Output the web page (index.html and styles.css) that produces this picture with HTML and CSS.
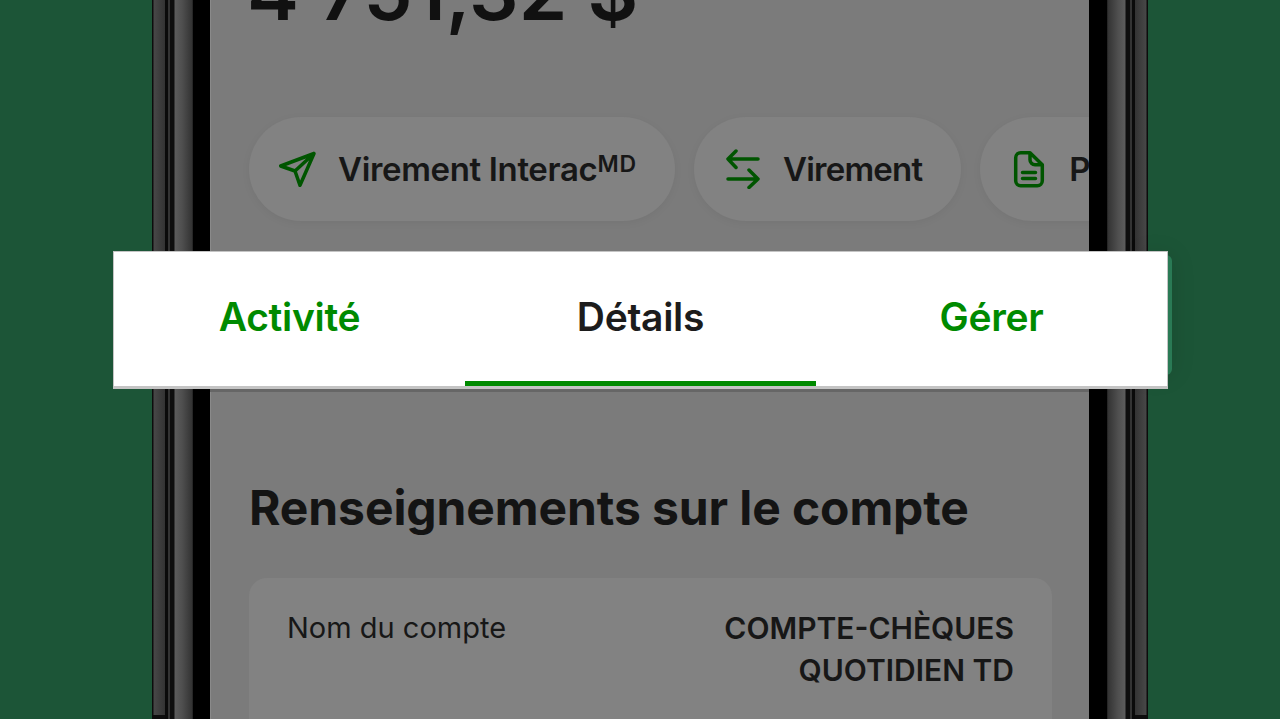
FILE: index.html
```html
<!DOCTYPE html>
<html lang="fr">
<head>
<meta charset="utf-8">
<title>Détails du compte</title>
<link rel="stylesheet" href="styles.css">
</head>
<body>
<main class="stage">
  <div class="phone">
    <div class="bezel"><span class="side-end"></span></div>
    <section class="screen">
      <p class="amount">4 751,32 $</p>
      <div class="actions">
        <div class="pill">
          <svg class="pill-icon" viewBox="0 0 40 40"><path d="M37 4.500 3.700 17 18 22l5 14.300zM18 22 37 4.500"/></svg>
          <span>Virement Interac<sup class="mark">MD</sup></span>
        </div>
        <div class="pill pill-tight">
          <svg class="pill-icon" viewBox="0 0 40 40"><path d="M36 10H6M14 2 6 10l8 8.500M6 30h30M27 21l9 9-9 8.500"/></svg>
          <span>Virement</span>
        </div>
        <div class="pill">
          <svg class="pill-icon" viewBox="0 0 40 40"><path d="M12.700 3.700h9.300l12.300 12v16a5 5 0 0 1-5 5H12.700a5 5 0 0 1-5-5V8.700a5 5 0 0 1 5-5zM22 3.700v7a5 5 0 0 0 5 5h7.300M14.500 23.500h13M14.500 29.500h13"/></svg>
          <span>Payer</span>
        </div>
      </div>
      <h2 class="heading">Renseignements sur le compte</h2>
      <div class="card">
        <span class="label">Nom du compte</span>
        <span class="value">COMPTE-CHÈQUES<br>QUOTIDIEN TD</span>
      </div>
    </section>
    <div class="bezel bezel-right"><span class="side-end"></span></div>
  </div>
  <div class="tabs-glow"></div>
  <div class="tabs-shadow"></div>
  <nav class="tabs">
    <a class="tab">Activité</a>
    <a class="tab tab-active">Détails</a>
    <a class="tab">Gérer</a>
  </nav>
</main>
</body>
</html>
```
FILE: styles.css
```css
* { box-sizing: border-box; }
html, body { margin: 0; height: 100%; }
body { overflow: hidden; background: #1c5537; font-family: Inter, "Liberation Sans", sans-serif; }
.stage { position: relative; width: 1280px; height: 719px; overflow: hidden; display: flex; padding-left: 152px; }
.phone { width: 996px; height: 719px; display: flex; }
.bezel {
  position: relative;
  flex: 0 0 58px;
  background: linear-gradient(to right,
    #0c0c0c 0, #0c0c0c 1px,
    #474747 2px, #333 13px,
    #0a0a0a 13px, #0a0a0a 16px,
    #333 16px, #333 18px,
    #0e0e0e 18px, #0e0e0e 22px,
    #5c5c5c 23px, #4f4f4f 30px, #333 40px, #1a1a1a 41px,
    #000 41px);
}
.bezel-right { flex-basis: 59px; transform: scaleX(-1); }
.side-end { position: absolute; left: 1px; bottom: 0; width: 12px; height: 4px; background: #0d0d0d; }
.screen { flex: 1; min-width: 0; overflow: hidden; background: #7b7b7b; border-left: 1px solid #8a8a8a; padding-left: 38px; color: #161616; }
.amount { margin: -49px 0 0 -2px; font-size: 78px; line-height: 82px; font-weight: 600; white-space: nowrap; color: #111; letter-spacing: .2px; }
.actions { display: flex; gap: 19px; margin-top: 84px; }
.pill {
  flex: none; height: 104px; padding: 0 38px 0 28px; border-radius: 52px; background: #828282;
  box-shadow: 0 2px 8px rgba(0,0,0,.05);
  display: flex; align-items: center; gap: 21px;
  font-size: 33px; font-weight: 600; letter-spacing: -.35px; white-space: nowrap; color: #171717;
}
.pill-tight { padding-right: 39px; letter-spacing: -.8px; }
.pill-icon { width: 40px; height: 40px; flex: none; fill: none; stroke: #005500; stroke-width: 3.5; stroke-linecap: round; stroke-linejoin: round; }
.mark { font-size: 23px; font-weight: 600; letter-spacing: .9px; line-height: 0; vertical-align: 9px; }
.heading { margin: 258px 0 0; font-size: 48px; line-height: 58px; font-weight: 700; letter-spacing: -.1px; white-space: nowrap; color: #141414; }
.card {
  width: 803px; height: 220px; margin-top: 41px; padding: 29px 38px;
  border-radius: 18px; background: #828282;
  display: flex; justify-content: space-between; align-items: flex-start;
  font-size: 30px; line-height: 42px; color: #171717;
}
.label { font-size: 29px; }
.value { text-align: right; font-weight: 600; }
.tabs-glow { position: absolute; left: 1140px; top: 255px; width: 32px; height: 120px; border-radius: 0 6px 6px 0; background: #2a7a55; box-shadow: 0 0 24px rgba(0,0,0,.12); }
.tabs-shadow { position: absolute; left: 210px; top: 389px; width: 879px; height: 3px; background: #666; }
.tabs {
  position: absolute; left: 113px; top: 251px; width: 1055px; height: 138px;
  display: flex; background: #fff;
  border: 1px solid #c4c4c4; border-width: 1px 1px 3px 1px;
}
.tab {
  position: relative; flex: 1; display: flex; align-items: center; justify-content: center;
  padding-bottom: 5px;
  font-size: 39px; font-weight: 600; letter-spacing: -.3px; color: #008a00;
}
.tab-active { color: #1c1c1c; }
.tab-active::after { content: ""; position: absolute; left: 0; right: 0; bottom: 0; height: 5px; background: #008a00; }
```
